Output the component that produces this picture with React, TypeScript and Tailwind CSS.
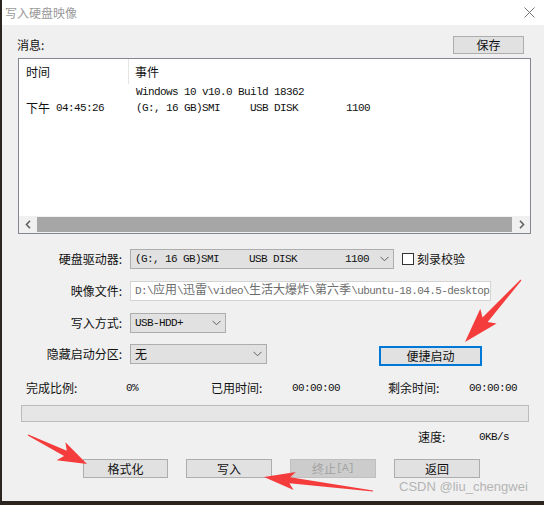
const mono = "font-['Liberation_Mono','Noto_Sans_CJK_SC',monospace] text-[11px] tracking-[-0.6px]"

function Chevron() {
  return (
    <svg width="9" height="6" viewBox="0 0 9 6" className="shrink-0">
      <path d="M0.5 0.8 L4.5 4.8 L8.5 0.8" fill="none" stroke="#606060" strokeWidth="1" />
    </svg>
  )
}

function Select({ width, children }: { width: string; children: React.ReactNode }) {
  return (
    <div className={`${width} h-[20px] flex items-center border border-[#adadad] bg-[#e1e1e1] pl-[4px] pr-[4px]`}>
      <span className={`${mono} flex-1 whitespace-pre text-[#111]`}>{children}</span>
      <Chevron />
    </div>
  )
}

function Btn({ children, disabled, className = '' }: { children: React.ReactNode; disabled?: boolean; className?: string }) {
  return (
    <div
      className={`h-[19px] flex items-center justify-center border text-[12px] leading-none ${
        disabled ? 'bg-[#cccccc] border-[#bfbfbf] text-[#a3a3a3]' : 'bg-[#e1e1e1] border-[#adadad] text-[#111]'
      } ${className}`}
    >
      {children}
    </div>
  )
}

function Arrow({ tx, ty, px, py, head = 26, hw = 10, sw = 3.5 }: { tx: number; ty: number; px: number; py: number; head?: number; hw?: number; sw?: number }) {
  const dx = px - tx
  const dy = py - ty
  const L = Math.hypot(dx, dy)
  const ux = dx / L
  const uy = dy / L
  const nx = -uy
  const ny = ux
  const at = (d: number, w: number) => `${(tx + ux * d + nx * w).toFixed(1)},${(ty + uy * d + ny * w).toFixed(1)}`
  const pts = [
    at(0, 0.6),
    at(L - head, sw),
    at(L - head - 5, hw),
    `${px},${py}`,
    at(L - head - 5, -hw),
    at(L - head, -sw),
    at(0, -0.6),
  ].join(' ')
  return <polygon points={pts} fill="#f53c3c" />
}

export default function App() {
  return (
    <div className="relative w-[544px] h-[505px] overflow-hidden bg-[#2b241f] pl-[2px] pb-[4px] font-['Noto_Sans_CJK_SC',sans-serif]">
      <div className="flex flex-col h-full bg-[#f0f0f0]">
        {/* title bar */}
        <div className="h-[25px] shrink-0 bg-white flex items-center justify-between pl-[3px] pr-[9px]">
          <span className="text-[12px] leading-none text-[#9a9a9a]">写入硬盘映像</span>
          <svg width="11" height="11" viewBox="0 0 11 11">
            <path d="M0.5 0.5 L10.5 10.5 M10.5 0.5 L0.5 10.5" stroke="#777" strokeWidth="1" />
          </svg>
        </div>

        {/* messages header */}
        <div className="mt-[11px] h-[18px] flex items-center">
          <span className="ml-[15px] text-[12px] leading-none text-[#111]">消息:</span>
          <Btn className="ml-auto mr-[20px] w-[71px] !h-[18px]">保存</Btn>
        </div>

        {/* list view */}
        <div className="mt-[4px] ml-[16px] w-[513px] h-[176px] border border-[#828790] bg-white flex flex-col">
          <div className="h-[25px] flex text-[12px] leading-none text-[#111]">
            <div className="w-[110px] pl-[7px] flex items-center border-r border-[#e5e5e5]">时间</div>
            <div className="pl-[6px] flex items-center">事件</div>
          </div>
          <div className="h-[16px] flex items-center">
            <div className="w-[111px]" />
            <span className={`${mono} pl-[6px] whitespace-pre text-[#111]`}>Windows 10 v10.0 Build 18362</span>
          </div>
          <div className="h-[16px] flex items-center text-[#111]">
            <div className="w-[111px] pl-[7px] flex items-center">
              <span className="text-[12px] leading-none">下午</span>
              <span className={`${mono} whitespace-pre`}> 04:45:26</span>
            </div>
            <span className={`${mono} pl-[6px] whitespace-pre`}>(G:, 16 GB)SMI     USB DISK        1100</span>
          </div>
          <div className="flex-1" />
          <div className="h-[17px] flex items-center bg-[#f0f0f0]">
            <div className="w-[17px] h-full flex items-center justify-center">
              <svg width="6" height="9" viewBox="0 0 6 9">
                <path d="M5 0.8 L1.5 4.5 L5 8.2" fill="none" stroke="#606060" strokeWidth="1.6" />
              </svg>
            </div>
            <div className="flex-1 h-[15px] bg-[#a6a6a6] mx-[1px]" />
            <div className="w-[17px] h-full flex items-center justify-center">
              <svg width="6" height="9" viewBox="0 0 6 9">
                <path d="M1 0.8 L4.5 4.5 L1 8.2" fill="none" stroke="#606060" strokeWidth="1.6" />
              </svg>
            </div>
          </div>
        </div>

        {/* form */}
        <div className="mt-[15px] h-[20px] flex items-center">
          <span className="w-[120px] text-right text-[12px] leading-none text-[#111]">硬盘驱动器:</span>
          <div className="ml-[8px]">
            <Select width="w-[264px]">(G:, 16 GB)SMI     USB DISK        1100</Select>
          </div>
          <div className="ml-[8px] w-[12px] h-[12px] border border-[#333] bg-white" />
          <span className="ml-[3px] text-[12px] leading-none text-[#111]">刻录校验</span>
        </div>

        <div className="mt-[12px] h-[20px] flex items-center">
          <span className="w-[120px] text-right text-[12px] leading-none text-[#111]">映像文件:</span>
          <div className="ml-[8px] w-[361px] h-[20px] border border-[#d4d4d4] bg-white pl-[4px] flex items-center overflow-hidden">
            <span className={`${mono} whitespace-pre text-[#6d6d6d]`}>
              D:\<span className="text-[12px] tracking-normal">应用</span>\<span className="text-[12px] tracking-normal">迅雷</span>\video\<span className="text-[12px] tracking-normal">生活大爆炸</span>\<span className="text-[12px] tracking-normal">第六季</span>\ubuntu-18.04.5-desktop
            </span>
          </div>
        </div>

        <div className="mt-[12px] h-[20px] flex items-center">
          <span className="w-[120px] text-right text-[12px] leading-none text-[#111]">写入方式:</span>
          <div className="ml-[8px]">
            <Select width="w-[96px]">USB-HDD+</Select>
          </div>
        </div>

        <div className="mt-[11px] flex items-start">
          <span className="w-[120px] h-[20px] flex items-center justify-end text-[12px] leading-none text-[#111]">隐藏启动分区:</span>
          <div className="ml-[8px]">
            <div className="w-[137px] h-[20px] flex items-center border border-[#adadad] bg-[#e1e1e1] pl-[4px] pr-[4px]">
              <span className="flex-1 text-[12px] leading-none text-[#111]">无</span>
              <Chevron />
            </div>
          </div>
          <div className="ml-[112px] mt-[2px] w-[103px] h-[20px] border-2 border-[#0078d7] bg-[#e1e1e1] flex items-center justify-center text-[12px] leading-none text-[#111]">
            便捷启动
          </div>
        </div>

        {/* stats */}
        <div className="mt-[14px] h-[16px] flex items-center text-[#111]">
          <span className="ml-[24px] w-[100px] text-[12px] leading-none">完成比例:</span>
          <span className={`${mono} w-[85px]`}>0%</span>
          <span className="w-[81px] text-[12px] leading-none">已用时间:</span>
          <span className={`${mono} w-[96px]`}>00:00:00</span>
          <span className="w-[81px] text-[12px] leading-none">剩余时间:</span>
          <span className={mono}>00:00:00</span>
        </div>

        <div className="mt-[9px] ml-[19px] w-[508px] h-[17px] border border-[#bcbcbc] bg-[#e6e6e6]" />

        <div className="mt-[7px] h-[16px] flex items-center text-[#111]">
          <span className="ml-[416px] w-[61px] text-[12px] leading-none">速度:</span>
          <span className={mono}>0KB/s</span>
        </div>

        <div className="mt-[14px] ml-[81px] flex gap-[18px]">
          <Btn className="w-[85px]">格式化</Btn>
          <Btn className="w-[86px]">写入</Btn>
          <Btn className="w-[86px]" disabled>
            终止<span className={mono}>[A]</span>
          </Btn>
          <Btn className="w-[86px]">返回</Btn>
        </div>
      </div>

      {/* watermark */}
      <div className="absolute left-[399px] top-[478px] font-['Liberation_Sans',sans-serif] text-[13px] leading-[18px] text-[#b4b4b4]">
        CSDN @liu_chengwei
      </div>

      {/* annotation arrows */}
      <svg className="absolute inset-0 pointer-events-none" width="544" height="505">
        <Arrow tx={521} ty={280} px={465} py={342} head={30} hw={11} sw={3.5} />
        <Arrow tx={28} ty={435} px={87} py={464} head={24} hw={10} sw={3} />
        <Arrow tx={373} ty={491} px={264} py={477} head={26} hw={9} sw={3} />
      </svg>
    </div>
  )
}
